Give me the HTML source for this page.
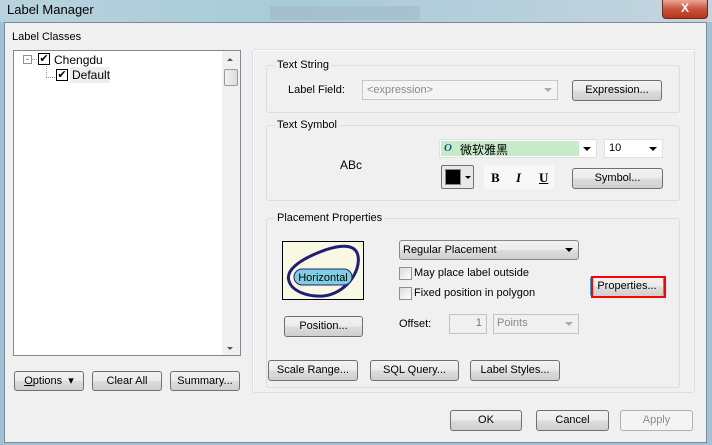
<!DOCTYPE html>
<html><head><meta charset="utf-8"><style>
*{box-sizing:border-box;margin:0;padding:0}
body{width:712px;height:445px;overflow:hidden;position:relative;background:#9fc3d4;font-family:"Liberation Sans","Noto Sans CJK SC",sans-serif;font-size:11px;color:#000}
.a{position:absolute}
.title{left:0;top:0;width:712px;height:22px;background:linear-gradient(90deg,#b9d3de,#a7cbd8 40%,#b7cfdc 70%,#c3d5de)}
.body{left:4px;top:22px;width:703px;height:421px;background:#f0f0f0;border:1px solid #7a8a96}
.btn{position:absolute;border:1px solid #707070;border-radius:3px;background:linear-gradient(#f2f2f2,#ebebeb 50%,#dddddd 51%,#cfcfcf);text-align:center;line-height:18px;font-size:11px}
.grp{position:absolute;border:1px solid #d5dfe5;border-radius:3px}
.lg{position:absolute;background:#f0f0f0;padding:0 2px;top:-7px;left:8px;line-height:12px}
.cb{position:absolute;width:13px;height:13px;border:1px solid #8e8f8f;background:linear-gradient(135deg,#dcdcdc,#fff)}
.combo{position:absolute;border:1px solid #a9a9a9;background:#fff}
.arr{position:absolute;right:5px;top:7px;width:0;height:0;border-left:4px solid transparent;border-right:4px solid transparent;border-top:4px solid #000}
</style></head><body>
<div class="a title"></div>
<div class="a" style="left:270px;top:6px;width:150px;height:14px;background:#9fb6c6;opacity:.5"></div>
<div class="a" style="left:7px;top:2px;font-size:13px">Label Manager</div>
<div class="a" style="left:662px;top:0;width:46px;height:19px;border:1px solid #6b2a20;border-top:none;border-radius:0 0 4px 4px;background:linear-gradient(#e9a899,#c9533b 50%,#b8341c);color:#fff;text-align:center;font-weight:bold;font-size:12px;line-height:17px">X</div>
<div class="a body"></div>
<div class="a" style="left:12px;top:31px">Label Classes</div>
<div class="a" style="left:13px;top:50px;width:228px;height:306px;border:1px solid #828790;background:#fff"></div>
<div class="a" style="left:222px;top:51px;width:18px;height:304px;background:#f0f0f0"></div>
<div class="a" style="left:224px;top:69px;width:14px;height:17px;border:1px solid #9a9a9a;border-radius:2px;background:linear-gradient(90deg,#f2f2f2,#dcdcdc)"></div>
<div class="a" style="left:227px;top:58px;border-left:3px solid transparent;border-right:3px solid transparent;border-bottom:3px solid #555"></div>
<div class="a" style="left:227px;top:347px;border-left:3px solid transparent;border-right:3px solid transparent;border-top:3px solid #555"></div>
<div class="a" style="left:23px;top:55px;width:9px;height:9px;border:1px solid #919191;font-size:9px;line-height:6px;text-align:center;color:#1c4f9c">-</div>
<div class="a" style="left:32px;top:59px;width:5px;border-top:1px dotted #999"></div>
<div class="a" style="left:46px;top:66px;height:11px;border-left:1px dotted #999"></div>
<div class="a" style="left:46px;top:77px;width:9px;border-top:1px dotted #999"></div>
<div class="a" style="left:38px;top:53px;width:12px;height:12px;border:1px solid #000;background:#fff;font-size:11px;line-height:10px;text-align:center">✔</div>
<div class="a" style="left:54px;top:53px;font-size:12px">Chengdu</div>
<div class="a" style="left:56px;top:69px;width:12px;height:12px;border:1px solid #000;background:#fff;font-size:11px;line-height:10px;text-align:center">✔</div>
<div class="a" style="left:70px;top:67px;width:40px;height:16px;background:#eee"></div>
<div class="a" style="left:72px;top:68px;font-size:12px">Default</div>
<div class="btn" style="left:14px;top:371px;width:70px;height:20px"><u>O</u>ptions&nbsp;&nbsp;▾</div>
<div class="btn" style="left:92px;top:371px;width:70px;height:20px">Clear All</div>
<div class="btn" style="left:170px;top:371px;width:70px;height:20px">Summary...</div>
<div class="a" style="left:252px;top:49px;width:443px;height:344px;border:1px solid #d9e0e5;border-radius:3px;box-shadow:inset 1px 1px 0 #fff"></div>
<div class="grp" style="left:266px;top:65px;width:414px;height:48px"><span class="lg">Text String</span></div>
<div class="a" style="left:288px;top:84px">Label Field:</div>
<div class="combo" style="left:362px;top:80px;width:196px;height:20px;border-color:#c8c8c8;background:#f4f4f4;color:#8a8a8a;padding:3px 4px">&lt;expression&gt;<span class="arr" style="border-top-color:#aaa"></span></div>
<div class="btn" style="left:572px;top:80px;width:90px;height:21px">Expression...</div>
<div class="grp" style="left:266px;top:125px;width:414px;height:76px"><span class="lg">Text Symbol</span></div>
<div class="a" style="left:340px;top:158px;font-size:12px">ABc</div>
<div class="combo" style="left:439px;top:139px;width:158px;height:19px;border-color:#e0e0e0"><div class="a" style="left:1px;top:1px;width:138px;height:15px;background:#c6ebc9"></div><div class="a" style="left:4px;top:2px;font-weight:bold;font-style:italic;color:#1a5a7a;font-family:'Liberation Serif'">O</div><div class="a" style="left:20px;top:1px;font-size:12px">微软雅黑</div><span class="arr"></span></div>
<div class="combo" style="left:604px;top:139px;width:59px;height:19px;border-color:#e0e0e0;padding:2px 4px">10<span class="arr"></span></div>
<div class="a" style="left:441px;top:165px;width:33px;height:24px;border:1px solid #707070;border-radius:2px;background:#e8e8e8"><div class="a" style="left:3px;top:3px;width:16px;height:16px;background:#000;border:1px solid #888"></div><div class="a" style="left:23px;top:10px;border-left:3px solid transparent;border-right:3px solid transparent;border-top:3px solid #000"></div></div>
<div class="a" style="left:484px;top:165px;width:70px;height:24px;background:#f8f8f8"></div>
<div class="a" style="left:491px;top:170px;font-weight:bold;font-family:'Liberation Serif';font-size:13px">B</div>
<div class="a" style="left:516px;top:170px;font-weight:bold;font-style:italic;font-family:'Liberation Serif';font-size:13px">I</div>
<div class="a" style="left:539px;top:170px;font-weight:bold;text-decoration:underline;font-family:'Liberation Serif';font-size:13px">U</div>
<div class="btn" style="left:572px;top:168px;width:91px;height:21px">Symbol...</div>
<div class="grp" style="left:266px;top:218px;width:414px;height:170px"><span class="lg">Placement Properties</span></div>
<div class="a" style="left:282px;top:241px;width:82px;height:59px;border:1px solid #000;background:#f9f9e3">
<svg width="80" height="57" style="position:absolute;left:0;top:0"><path d="M6 39 C2 28 18 18 32 12 C48 5 72 -2 75 14 C78 30 62 52 40 54 C24 55 9 49 6 39 Z" fill="none" stroke="#1f1f7a" stroke-width="3"/><rect x="11" y="27" width="58" height="16" rx="8" fill="#7fcfe0" stroke="#1f1f7a"/><text x="40" y="39" text-anchor="middle" font-family="Liberation Sans" font-size="11">Horizontal</text></svg></div>
<div class="btn" style="left:284px;top:316px;width:79px;height:21px">Position...</div>
<div class="btn" style="left:399px;top:240px;width:180px;height:20px;text-align:left;padding-left:3px;border-color:#888">Regular Placement<span class="arr" style="top:7px"></span></div>
<div class="cb" style="left:399px;top:267px"></div><div class="a" style="left:414px;top:267px">May place label outside</div>
<div class="cb" style="left:399px;top:287px"></div><div class="a" style="left:414px;top:287px">Fixed position in polygon</div>
<div class="btn" style="left:590px;top:276px;width:74px;height:21px;border-color:#3c9bd1">Properties...</div>
<div class="a" style="left:591px;top:276px;width:75px;height:22px;border:2px solid #f00"></div>
<div class="a" style="left:399px;top:318px">Offset:</div>
<div class="a" style="left:449px;top:314px;width:38px;height:20px;border:1px solid #c4c4c4;background:#f0f0f0;color:#777;text-align:right;padding:2px 4px">1</div>
<div class="a" style="left:493px;top:314px;width:86px;height:20px;border:1px solid #c4c4c4;background:#f0f0f0;color:#888;padding:2px 3px">Points<span class="arr" style="border-top-color:#aaa"></span></div>
<div class="btn" style="left:268px;top:360px;width:90px;height:21px">Scale Range...</div>
<div class="btn" style="left:370px;top:360px;width:89px;height:21px">SQL Query...</div>
<div class="btn" style="left:470px;top:360px;width:90px;height:21px">Label Styles...</div>
<div class="btn" style="left:450px;top:410px;width:72px;height:21px">OK</div>
<div class="btn" style="left:536px;top:410px;width:73px;height:21px">Cancel</div>
<div class="btn" style="left:620px;top:410px;width:73px;height:21px;border-color:#adb2b5;background:#f4f4f4;color:#8d8d8d">Apply</div>
</body></html>
